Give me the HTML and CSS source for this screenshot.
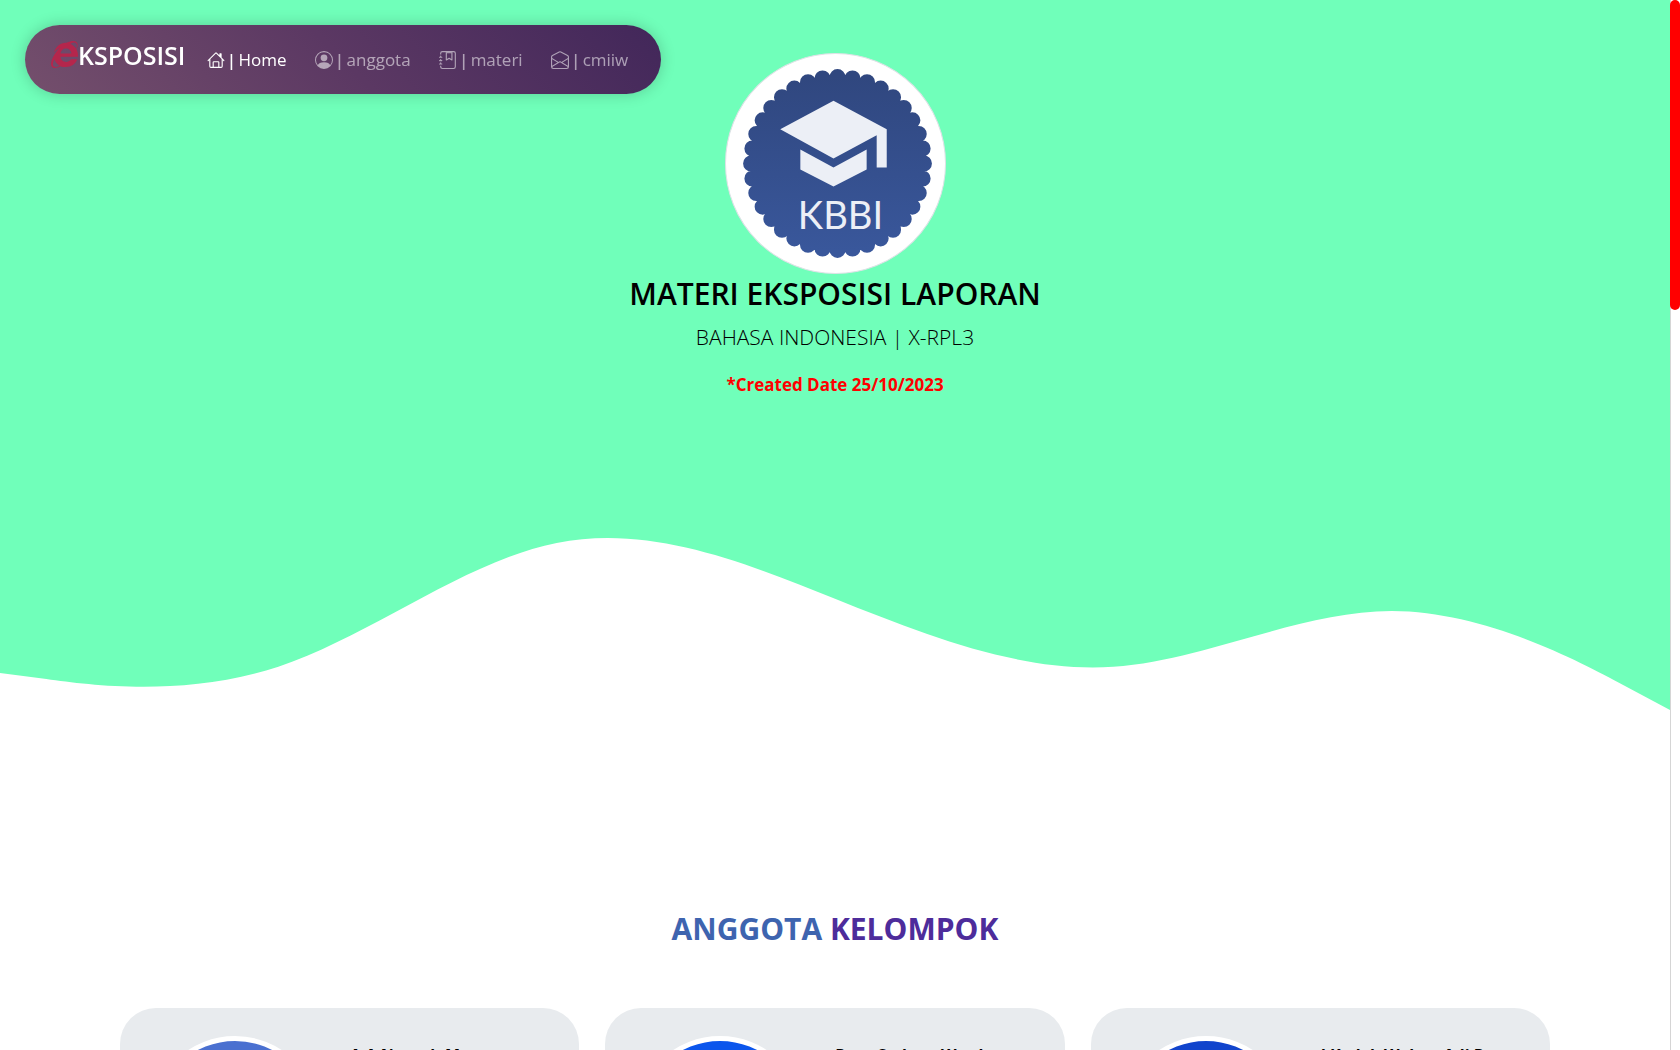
FILE: index.html
```html
<!DOCTYPE html>
<html lang="id">
<head>
<meta charset="utf-8">
<meta name="viewport" content="width=device-width, initial-scale=1">
<title>Eksposisi</title>
<link rel="stylesheet" href="styles.css">
</head>
<body>
<nav class="navbar" aria-label="Utama">
  <a class="brand" href="#home">
    <svg class="brand-e" viewBox="0 0 512 512" aria-hidden="true">
      <path fill="currentColor" d="M483.049 159.706c10.855-24.575 21.424-60.438 21.424-87.871 0-72.722-79.641-98.371-209.673-38.577-107.632-7.181-211.221 73.670-237.098 186.457 30.852-34.862 78.271-82.298 121.977-101.158C125.404 166.850 79.128 228.002 43.992 291.725 23.246 329.651 0 390.940 0 436.747c0 98.575 92.854 86.500 180.251 42.006 31.423 15.430 66.559 15.573 101.695 15.573 97.124 0 184.249-54.294 216.814-146.022H377.927c-52.509 88.593-196.819 52.996-196.819-47.436H509.900c6.407-43.581-1.655-95.715-26.851-141.162zM64.559 346.877c17.711 51.150 53.703 95.871 100.266 123.304-88.741 48.940-173.267 29.096-100.266-123.304zm115.977-108.873c2-55.152 50.276-94.871 103.980-94.871 53.418 0 101.981 39.720 103.981 94.871H180.536zm184.536-187.600c21.425-10.287 48.563-22.003 72.558-22.003 31.422 0 54.274 21.717 54.274 53.722 0 20.003-7.427 49.007-14.569 67.867-26.280-42.292-65.986-81.584-112.263-99.586z"/>
    </svg><span>KSPOSISI</span>
  </a>
  <ul class="nav-list">
    <li><a class="nav-link active" href="#home"><svg class="icon" viewBox="0 0 16 16" aria-hidden="true"><path d="M8.707 1.500a1 1 0 0 0-1.414 0L.646 8.146a.5.5 0 0 0 .708.708L2 8.207V13.500A1.500 1.500 0 0 0 3.500 15h9a1.500 1.500 0 0 0 1.500-1.500V8.207l.646.647a.5.5 0 0 0 .708-.708L13 5.793V2.500a.5.5 0 0 0-.5-.5h-1a.5.5 0 0 0-.5.5v1.293zM13 7.207V13.500a.5.5 0 0 1-.5.5H11v-4a1 1 0 0 0-1-1H6a1 1 0 0 0-1 1v4H3.500a.5.5 0 0 1-.5-.5V7.207l5-5zM6 14v-4h4v4z"/></svg><span class="bar">|</span>Home</a></li>
    <li><a class="nav-link" href="#anggota"><svg class="icon" viewBox="0 0 16 16" aria-hidden="true"><path d="M11 6a3 3 0 1 1-6 0 3 3 0 0 1 6 0"/><path fill-rule="evenodd" d="M0 8a8 8 0 1 1 16 0A8 8 0 0 1 0 8m8-7a7 7 0 0 0-5.468 11.370C3.242 11.226 4.805 10 8 10s4.757 1.225 5.468 2.370A7 7 0 0 0 8 1"/></svg><span class="bar">|</span>anggota</a></li>
    <li><a class="nav-link" href="#materi"><svg class="icon" viewBox="0 0 16 16" aria-hidden="true"><path fill-rule="evenodd" d="M6 1h6v7a.5.5 0 0 1-.757.429L9 7.083 6.757 8.430A.5.5 0 0 1 6 8zm1 1v5.117L8.743 6.070a.5.5 0 0 1 .514 0L11 7.117V2z"/><path d="M3 0h10a2 2 0 0 1 2 2v12a2 2 0 0 1-2 2H3a2 2 0 0 1-2-2v-1h1v1a1 1 0 0 0 1 1h10a1 1 0 0 0 1-1V2a1 1 0 0 0-1-1H3a1 1 0 0 0-1 1v1H1V2a2 2 0 0 1 2-2"/><path d="M1 5v-.5a.5.5 0 0 1 1 0V5h.5a.5.5 0 0 1 0 1h-2a.5.5 0 0 1 0-1zm0 3v-.5a.5.5 0 0 1 1 0V8h.5a.5.5 0 0 1 0 1h-2a.5.5 0 0 1 0-1zm0 3v-.5a.5.5 0 0 1 1 0v.5h.5a.5.5 0 0 1 0 1h-2a.5.5 0 0 1 0-1z"/></svg><span class="bar">|</span>materi</a></li>
    <li><a class="nav-link" href="#cmiiw"><svg class="icon" viewBox="0 0 16 16" aria-hidden="true"><path d="M8.470 1.318a1 1 0 0 0-.940 0l-6 3.200A1 1 0 0 0 1 5.400v.817l5.750 3.450L8 8.917l1.250.750L15 6.217V5.400a1 1 0 0 0-.530-.882zM15 7.383l-4.778 2.867L15 13.117zm-.035 6.880L8 10.082l-6.965 4.180A1 1 0 0 0 2 15h12a1 1 0 0 0 .965-.738ZM1 13.116l4.778-2.867L1 7.383v5.734ZM7.059.435a2 2 0 0 1 1.882 0l6 3.200A2 2 0 0 1 16 5.400V14a2 2 0 0 1-2 2H2a2 2 0 0 1-2-2V5.400a2 2 0 0 1 1.059-1.765z"/></svg><span class="bar">|</span>cmiiw</a></li>
  </ul>
</nav>

<header class="hero" id="home">
  <svg class="logo" viewBox="0 0 220 220" role="img" aria-label="KBBI">
    <defs>
      <linearGradient id="seal" x1="0" y1="0" x2="0" y2="1"><stop offset="0" stop-color="#30477f"/><stop offset="1" stop-color="#39579b"/></linearGradient>
    </defs>
    <circle cx="110" cy="110" r="109.500" fill="#fff" stroke="#dee2e6"/>
    <circle class="scallops" cx="112" cy="110" r="86" pathLength="72"/>
    <circle cx="112" cy="110" r="87" fill="url(#seal)"/>
    <path fill="#eceff6" d="M108 47.500 161 76v38h-10V82l-43 23-53-29zM75 96l33 18 33-18v20l-33 17-33-17z"/>
    <text class="logo-text" x="115" y="175" text-anchor="middle">KBBI</text>
  </svg>
  <h1 class="hero-title">MATERI EKSPOSISI LAPORAN</h1>
  <p class="hero-lead">BAHASA INDONESIA | X-RPL3</p>
  <p class="hero-date">*Created Date 25/10/2023</p>
  <svg class="wave" viewBox="0 0 1440 320" aria-hidden="true"><path fill="#fff" d="M0,256L40,261.300C80,267,160,277,240,250.700C320,224,400,160,480,144C560,128,640,160,720,192C800,224,880,256,960,250.700C1040,245,1120,203,1200,202.700C1280,203,1360,245,1400,266.700L1440,288L1440,321L0,321Z"/></svg>
</header>

<main class="members" id="anggota">
  <h2 class="members-title"><span class="blue">ANGGOTA</span> <span class="violet">KELOMPOK</span></h2>
  <div class="cards">
    <article class="card"><div class="avatar avatar-a"></div><h3 class="name">A.A Ngurah M</h3></article>
    <article class="card"><div class="avatar avatar-b"></div><h3 class="name">Putu Sudana Wardana</h3></article>
    <article class="card"><div class="avatar avatar-c"></div><h3 class="name">I Kadek Wahyu Adi Putra</h3></article>
  </div>
</main>
<div class="scroll-track" aria-hidden="true"><div class="scroll-thumb"></div></div>
</body>
</html>
```
FILE: styles.css
```css
* { box-sizing: border-box; }
html { scrollbar-width: none; }
body {
  margin: 0;
  padding-right: 10px;
  overflow-x: hidden;
  background: #fff;
  color: #000;
  font-family: "Open Sans", "Noto Sans", sans-serif;
  font-size: 16px;
  line-height: 24px;
}
h1, h2, h3, p, ul { margin: 0; padding: 0; }
a { color: inherit; text-decoration: none; }

.navbar {
  position: fixed;
  top: 25px;
  left: 25px;
  z-index: 2;
  display: flex;
  height: 69px;
  padding: 0 19px 0 26px;
  align-items: center;
  border-radius: 35px;
  background: linear-gradient(45deg, #744f6c, #5b3863 50%, #42275a);
  box-shadow: 0 0 15px rgba(0, 0, 0, .2);
}
.brand {
  display: flex;
  align-items: center;
  padding-bottom: 10px;
  color: #fff;
  font-size: 25px;
  font-weight: 600;
  line-height: 32px;
}
.brand-e { width: 27px; height: 27px; color: #b5264c; }
.nav-list { display: flex; margin-left: 7px; list-style: none; }
.nav-link {
  display: flex;
  align-items: center;
  padding: 0 14px;
  color: rgba(255, 255, 255, .55);
  font-size: 17px;
}
.nav-link.active { color: #fff; }
.bar { width: 14px; font-weight: 600; text-align: center; }
.icon { width: 18px; height: 18px; fill: currentColor; }

.hero {
  display: flex;
  flex-direction: column;
  align-items: center;
  padding-top: 53px;
  background: #70ffba;
  text-align: center;
}
.logo { width: 221px; height: 221px; }
.scallops {
  fill: none;
  stroke: url(#seal);
  stroke-width: 16;
  stroke-linecap: round;
  stroke-dasharray: 0 2;
}
.logo-text { fill: #eceff6; font-family: Lato, sans-serif; font-size: 38px; }
.hero-title { font-size: 30px; font-weight: 600; line-height: 40px; }
.hero-lead { margin-top: 8px; font-size: 21px; font-weight: 300; line-height: 30px; }
.hero-date { margin-top: 21px; color: #f00; font-size: 17px; font-weight: 700; }
.wave { display: block; width: 100%; margin-top: -21px; margin-bottom: -1px; }

.members { padding: 163px 120px 0; }
.members-title { font-size: 30px; font-weight: 700; line-height: 40px; text-align: center; }
.blue { color: #3e64af; }
.violet { color: #4d2c9b; }
.cards { display: grid; grid-template-columns: repeat(3, 1fr); gap: 26px; margin-top: 59px; }
.card {
  display: grid;
  grid-template-columns: 170px 1fr;
  gap: 30px;
  padding: 28px 30px;
  border-radius: 36px;
  background: #e8ebee;
}
.avatar {
  width: 170px;
  height: 170px;
  border: 5px solid #fff;
  border-radius: 50%;
}
.avatar-a { background: #4a70d0; }
.avatar-b { background: #0b55ec; }
.avatar-c { background: #1144cc; }
.name { padding-top: 7px; font-size: 16px; font-weight: 700; }

.scroll-track {
  position: fixed;
  top: 0;
  right: 0;
  bottom: 0;
  width: 10px;
  border-left: 1px solid #d5d5d5;
  background: #fff;
}
.scroll-thumb { height: 310px; margin-left: -1px; border-radius: 5px; background: #f00; }
```
